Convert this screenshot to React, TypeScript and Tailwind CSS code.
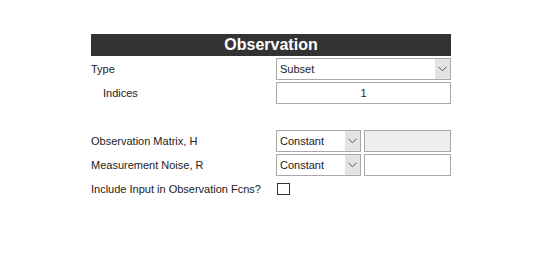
const Chevron = () => (
  <svg width="9" height="6" viewBox="0 0 9 6" className="text-[#555]">
    <path d="M0.5 0.8 L4.5 4.8 L8.5 0.8" fill="none" stroke="currentColor" strokeWidth="1" />
  </svg>
);

const Select = ({ value, className }: { value: string; className: string }) => (
  <div className={`flex h-[22px] border border-[#a9a9a9] bg-white ${className}`}>
    <span className="flex-1 px-[3px] leading-[20px]">{value}</span>
    <span className="flex w-[15px] items-center justify-center bg-[#e3e3e3]">
      <Chevron />
    </span>
  </div>
);

const Label = ({ children, indent }: { children: React.ReactNode; indent?: boolean }) => (
  <div className={`w-[185px] ${indent ? "pl-[12px]" : ""}`}>{children}</div>
);

export default function App() {
  return (
    <div className="h-[265px] w-[544px] bg-white pt-[34px] pl-[91px] text-[11px] text-[#222]" style={{ fontFamily: '"Liberation Sans", Arial, sans-serif' }}>
      <div className="w-[360px]">
        <div className="h-[22px] bg-[#333333] text-center text-[16px] font-bold leading-[22px] text-white">
          Observation
        </div>

        <div className="mt-[2px] flex items-center">
          <Label>Type</Label>
          <Select value="Subset" className="w-[175px]" />
        </div>

        <div className="mt-[2px] flex items-center">
          <Label indent>Indices</Label>
          <div className="h-[22px] w-[175px] border border-[#a9a9a9] bg-white text-center leading-[20px]">1</div>
        </div>

        <div className="mt-[26px] flex items-center">
          <Label>Observation Matrix, H</Label>
          <Select value="Constant" className="w-[85px]" />
          <div className="ml-[3px] h-[22px] w-[87px] border border-[#a9a9a9] bg-[#eeeeee]" />
        </div>

        <div className="mt-[2px] flex items-center">
          <Label>Measurement Noise, R</Label>
          <Select value="Constant" className="w-[85px]" />
          <div className="ml-[3px] h-[22px] w-[87px] border border-[#a9a9a9] bg-white" />
        </div>

        <div className="mt-[2px] flex h-[22px] items-center">
          <Label>Include Input in Observation Fcns?</Label>
          <span className="ml-px h-[12px] w-[13px] border border-[#333] bg-white" />
        </div>
      </div>
    </div>
  );
}
